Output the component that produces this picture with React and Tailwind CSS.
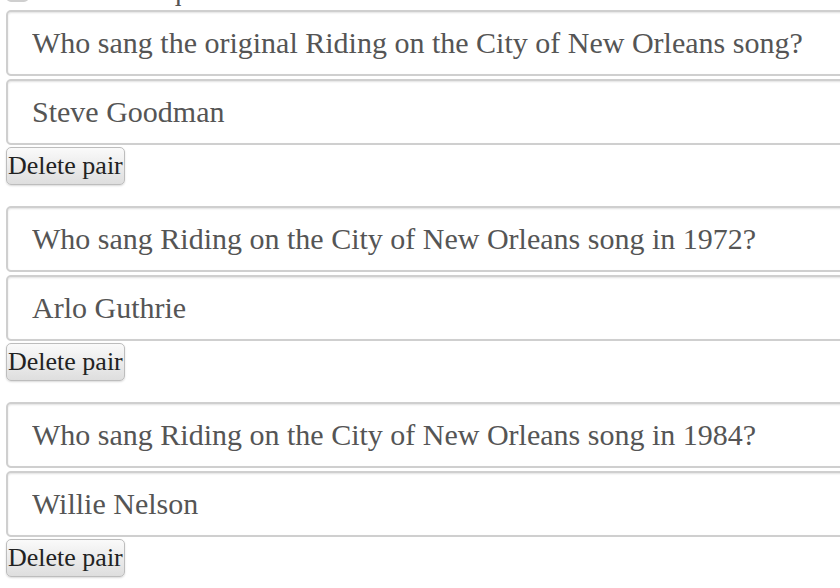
const pairs = [
  { q: "Who sang the original Riding on the City of New Orleans song?", a: "Steve Goodman" },
  { q: "Who sang Riding on the City of New Orleans song in 1972?", a: "Arlo Guthrie" },
  { q: "Who sang Riding on the City of New Orleans song in 1984?", a: "Willie Nelson" },
];

const serif = { fontFamily: "'Liberation Serif', Georgia, serif" };

function Field({ value }) {
  return (
    <input
      type="text"
      defaultValue={value}
      className="block w-[860px] h-[66px] rounded-[5px] border-2 border-[#cfcfcf] bg-white pl-[24px] text-[30px] text-[#555] shadow-[inset_0_1px_2px_rgba(0,0,0,0.12)] outline-none"
      style={serif}
    />
  );
}

export default function App() {
  return (
    <div className="w-[840px] h-[588px] overflow-hidden bg-white text-[#222]" style={serif}>
      <div className="-mt-[21px] px-[6px]">
        {/* checkbox row, mostly scrolled off */}
        <div className="flex items-end gap-[46px] h-[23px]">
          <span className="w-[23px] h-[23px] rounded-[5px] border-2 border-[#cfcfcf] bg-white" />
          <span className="text-[29px] leading-[23px] text-[#555]">Shuffle questions</span>
        </div>

        {pairs.map((p, i) => (
          <div key={i} className={i === 0 ? "mt-[8px]" : "mt-[21px]"}>
            <Field value={p.q} />
            <div className="mt-[3px]">
              <Field value={p.a} />
            </div>
            <button
              type="button"
              className="mt-[2px] block h-[38px] whitespace-nowrap rounded-[5px] border border-[#bdbdbd] bg-gradient-to-b from-[#fafafa] to-[#dedede] px-[1px] text-[26px] leading-none text-[#222] shadow-[0_1px_2px_rgba(0,0,0,0.15)]"
            >
              Delete pair
            </button>
          </div>
        ))}
      </div>
    </div>
  );
}
